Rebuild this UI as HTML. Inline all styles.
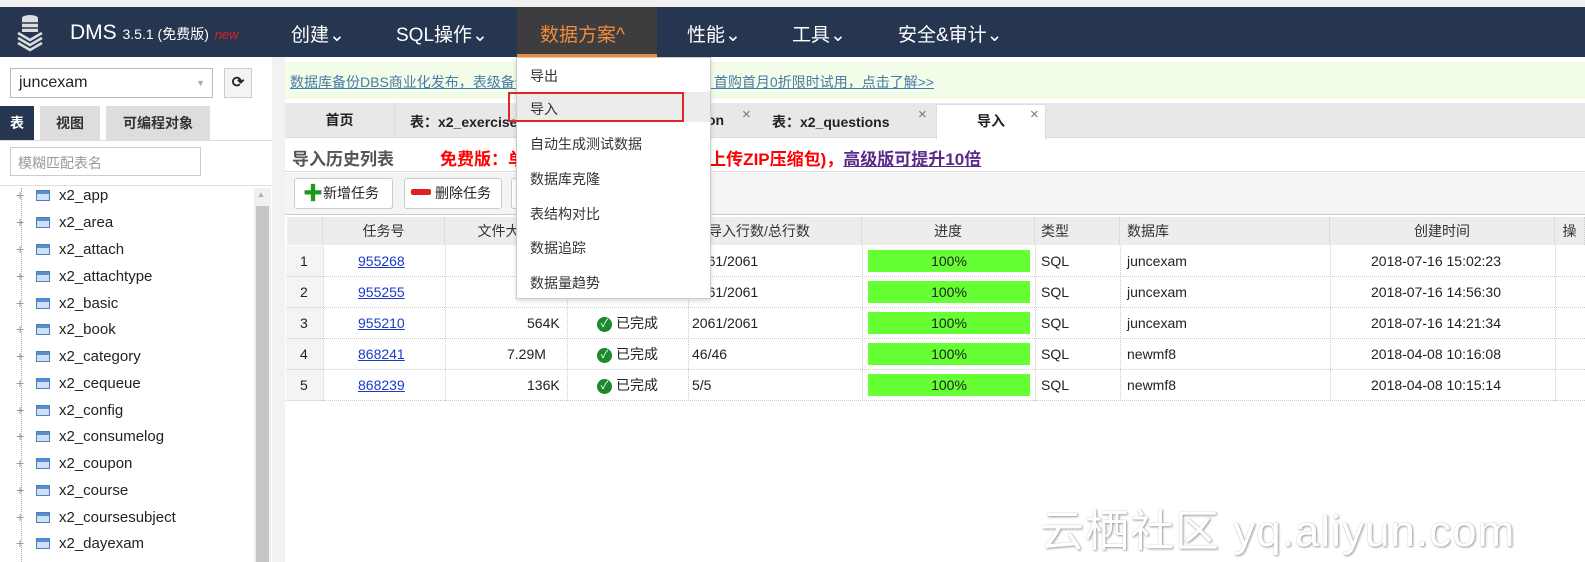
<!DOCTYPE html>
<html><head><meta charset="utf-8"><style>
*{margin:0;padding:0;box-sizing:border-box}
body{width:1585px;height:562px;overflow:hidden;background:#fff;font-family:"Liberation Sans","Noto Sans CJK SC",sans-serif;font-size:15px;color:#222;position:relative}
.a{position:absolute;white-space:nowrap}
.nav{left:0;top:7px;width:1585px;height:50px;background:#263650}
.ni{color:#fff;font-size:19px;top:20px}
.tree{left:16px;font-size:15px;color:#222}
.tree i{display:inline-block;width:14px;height:11px;border:1px solid #4d7fc0;background:linear-gradient(#5b8dd0 0 3px,#cfe0f5 3px);margin:0 9px 0 10px;vertical-align:-1px}
.tree b{display:inline-block;width:10px;color:#999;font-weight:normal;font-size:14px}
.th{top:217px;height:28px;background:#ededed;border-right:1px dotted #ccc;text-align:center;line-height:28px;font-size:14px;color:#333}
.row{left:286px;width:1299px;height:31px;border-bottom:1px dotted #ccc}
.c{line-height:30px;font-size:14px}
.bar{background:#66ff33;width:162px;height:22px;text-align:center;line-height:22px;font-size:14px}
.ok{display:inline-block;width:15px;height:15px;border-radius:50%;background:#1a8a2a;color:#fff;font-size:11px;line-height:15px;text-align:center;vertical-align:1px;margin-right:4px}
.dd{color:#333;font-size:14px;left:530px}
</style></head><body>
<div class="a" style="left:0;top:0;width:1585px;height:7px;background:#f0f0f0"></div>
<div class="a nav"></div>
<svg class="a" style="left:16px;top:13px" width="28" height="40" viewBox="0 0 28 40"><ellipse cx="14" cy="5" rx="8" ry="3" fill="#ddd"/><rect x="6" y="5" width="16" height="14" fill="#ddd"/><path d="M6 10h16M6 15h16" stroke="#263650" stroke-width="1.5"/><path d="M2 20l12 7 12-7M2 25l12 7 12-7M2 30l12 7 12-7" stroke="#ddd" stroke-width="2.5" fill="none"/></svg>
<div class="a" style="left:70px;top:21px;color:#fff;font-size:21px">DMS <span style="font-size:14px">3.5.1 (免费版)</span> <span style="color:#e02020;font-size:13px;font-style:italic">new</span></div>
<div class="a ni" style="left:291px">创建⌄</div>
<div class="a ni" style="left:396px">SQL操作⌄</div>
<div class="a" style="left:517px;top:7px;width:140px;height:50px;background:#3d3d3f;border-bottom:3px solid #f08a3c"></div>
<div class="a ni" style="left:540px;color:#f08a3c">数据方案^</div>
<div class="a ni" style="left:687px">性能⌄</div>
<div class="a ni" style="left:792px">工具⌄</div>
<div class="a ni" style="left:898px">安全&amp;审计⌄</div>

<div class="a" style="left:272px;top:57px;width:13px;height:505px;background:#f2f2f2"></div>
<div class="a" style="left:10px;top:68px;width:203px;height:30px;border:1px solid #bbb;padding:5px 8px;font-size:16px">juncexam<span style="position:absolute;right:7px;top:9px;color:#aaa;font-size:9px">▼</span></div>
<div class="a" style="left:224px;top:68px;width:28px;height:30px;border:1px solid #ccc;background:#f4f4f4;text-align:center;line-height:28px;font-weight:bold">⟳</div>
<div class="a" style="left:0;top:106px;width:34px;height:34px;background:#263650;color:#fff;font-weight:bold;text-align:center;line-height:34px;font-size:14px">表</div>
<div class="a" style="left:40px;top:106px;width:60px;height:34px;background:#ddd;font-weight:bold;text-align:center;line-height:34px;font-size:14px;color:#333">视图</div>
<div class="a" style="left:106px;top:106px;width:104px;height:34px;background:#ddd;font-weight:bold;text-align:center;line-height:34px;font-size:14px;color:#333">可编程对象</div>
<div class="a" style="left:0;top:140px;width:272px;height:1px;background:#ddd"></div>
<div class="a" style="left:10px;top:147px;width:191px;height:29px;border:1px solid #ccc;padding:5px 7px;color:#999;font-size:14px">模糊匹配表名</div>
<div class="a" style="left:0;top:185px;width:272px;height:1px;background:#ddd"></div>
<div class="a" style="left:21px;top:188px;height:374px;border-left:1px dotted #aaa"></div>
<div class="a" style="left:254px;top:188px;width:17px;height:374px;background:#f0f0f0"></div>
<div class="a" style="left:256px;top:206px;width:13px;height:356px;background:#c6c6c6"></div>
<div class="a" style="left:257px;top:190px;font-size:8px;color:#aaa">▲</div>
<div class="a tree" style="top:187px"><b>+</b><i></i>x2_app</div>
<div class="a tree" style="top:214px"><b>+</b><i></i>x2_area</div>
<div class="a tree" style="top:241px"><b>+</b><i></i>x2_attach</div>
<div class="a tree" style="top:268px"><b>+</b><i></i>x2_attachtype</div>
<div class="a tree" style="top:295px"><b>+</b><i></i>x2_basic</div>
<div class="a tree" style="top:321px"><b>+</b><i></i>x2_book</div>
<div class="a tree" style="top:348px"><b>+</b><i></i>x2_category</div>
<div class="a tree" style="top:375px"><b>+</b><i></i>x2_cequeue</div>
<div class="a tree" style="top:402px"><b>+</b><i></i>x2_config</div>
<div class="a tree" style="top:428px"><b>+</b><i></i>x2_consumelog</div>
<div class="a tree" style="top:455px"><b>+</b><i></i>x2_coupon</div>
<div class="a tree" style="top:482px"><b>+</b><i></i>x2_course</div>
<div class="a tree" style="top:509px"><b>+</b><i></i>x2_coursesubject</div>
<div class="a tree" style="top:535px"><b>+</b><i></i>x2_dayexam</div>

<div class="a" style="left:285px;top:62px;width:1300px;height:37px;background:#f1fde9"></div>
<div class="a" style="left:290px;top:72px;color:#4a7aa6;text-decoration:underline;font-size:14px">数据库备份DBS商业化发布，表级备份、秒级RPO，免费试用DBS，首购首月0折限时试用，点击了解&gt;&gt;</div>
<div class="a" style="left:285px;top:103px;width:1300px;height:35px;background:#e8e8e8;border-bottom:1px solid #ddd"></div>
<div class="a" style="left:285px;top:103px;width:110px;height:35px;border-right:1px solid #ddd;text-align:center;line-height:35px;font-weight:bold;font-size:14px">首页</div>
<div class="a" style="left:410px;top:112px;font-weight:bold;font-size:14px">表：x2_exercise</div>
<div class="a" style="left:707px;top:112px;font-weight:bold;font-size:14px">on</div>
<div class="a" style="left:742px;top:106px;color:#777">×</div>
<div class="a" style="left:772px;top:112px;font-weight:bold;font-size:14px">表：x2_questions</div>
<div class="a" style="left:918px;top:106px;color:#777">×</div>
<div class="a" style="left:936px;top:104px;width:110px;height:35px;background:#fff;border:1px solid #ddd;border-bottom:none;text-align:center;line-height:33px;font-weight:bold;font-size:14px">导入</div>
<div class="a" style="left:1030px;top:106px;color:#777">×</div>
<div class="a" style="left:285px;top:138px;width:1300px;height:34px;border-bottom:1px solid #ddd"></div>
<div class="a" style="left:292px;top:145px;font-weight:bold;font-size:17px;color:#555">导入历史列表</div>
<div class="a" style="left:440px;top:145px;font-weight:bold;font-size:17px;color:#f00">免费版：单个文件最大支持100M(可上传ZIP压缩包)，<span style="color:#5a2a8a;text-decoration:underline">高级版可提升10倍</span></div>
<div class="a" style="left:285px;top:173px;width:1300px;height:42px;background:#f4f4f4;border-bottom:1px solid #ccc"></div>
<div class="a" style="left:294px;top:178px;width:99px;height:31px;background:#fff;border:1px solid #ccc;border-radius:3px;line-height:29px;padding-left:8px;font-size:14px"><span style="color:#1a9a1a;font-size:20px;font-weight:bold;vertical-align:-2px">✚</span>新增任务</div>
<div class="a" style="left:404px;top:178px;width:98px;height:31px;background:#fff;border:1px solid #ccc;border-radius:3px;line-height:29px;padding-left:6px;font-size:14px"><span style="display:inline-block;width:20px;height:6px;background:#e02020;border-radius:2px;vertical-align:3px;margin-right:4px"></span>删除任务</div>
<div class="a" style="left:511px;top:178px;width:10px;height:31px;background:#fff;border:1px solid #ccc;border-radius:3px"></div>

<div class="a th" style="left:287px;width:36px"></div>
<div class="a th" style="left:323px;width:122px">任务号</div>
<div class="a th" style="left:445px;width:122px">文件大小</div>
<div class="a th" style="left:567px;width:121px">状态</div>
<div class="a th" style="left:688px;width:174px;text-align:left;padding-left:6px">已导入行数/总行数</div>
<div class="a th" style="left:862px;width:173px">进度</div>
<div class="a th" style="left:1035px;width:85px;text-align:left;padding-left:6px">类型</div>
<div class="a th" style="left:1120px;width:210px;text-align:left;padding-left:7px">数据库</div>
<div class="a th" style="left:1330px;width:225px">创建时间</div>
<div class="a th" style="left:1555px;width:30px">操</div>

<div class="a" style="left:323px;top:246px;height:155px;border-left:1px dotted #ccc"></div>
<div class="a" style="left:445px;top:246px;height:155px;border-left:1px dotted #ccc"></div>
<div class="a" style="left:567px;top:246px;height:155px;border-left:1px dotted #ccc"></div>
<div class="a" style="left:688px;top:246px;height:155px;border-left:1px dotted #ccc"></div>
<div class="a" style="left:862px;top:246px;height:155px;border-left:1px dotted #ccc"></div>
<div class="a" style="left:1035px;top:246px;height:155px;border-left:1px dotted #ccc"></div>
<div class="a" style="left:1120px;top:246px;height:155px;border-left:1px dotted #ccc"></div>
<div class="a" style="left:1330px;top:246px;height:155px;border-left:1px dotted #ccc"></div>
<div class="a" style="left:1555px;top:246px;height:155px;border-left:1px dotted #ccc"></div>
<div class="a" style="left:286px;top:246px;width:37px;height:155px;background:#f4f4f4"></div>

<div class="a row" style="top:246px"></div><div class="a row" style="top:277px"></div><div class="a row" style="top:308px"></div><div class="a row" style="top:339px"></div><div class="a row" style="top:370px"></div>

<div class="a c" style="left:300px;top:246px">1</div><div class="a c" style="left:358px;top:246px;color:#1a3acc;text-decoration:underline">955268</div><div class="a c" style="left:692px;top:246px">2061/2061</div><div class="a bar" style="left:868px;top:250px">100%</div><div class="a c" style="left:1041px;top:246px">SQL</div><div class="a c" style="left:1127px;top:246px">juncexam</div><div class="a c" style="left:1371px;top:246px">2018-07-16 15:02:23</div>
<div class="a c" style="left:300px;top:277px">2</div><div class="a c" style="left:358px;top:277px;color:#1a3acc;text-decoration:underline">955255</div><div class="a c" style="left:692px;top:277px">2061/2061</div><div class="a bar" style="left:868px;top:281px">100%</div><div class="a c" style="left:1041px;top:277px">SQL</div><div class="a c" style="left:1127px;top:277px">juncexam</div><div class="a c" style="left:1371px;top:277px">2018-07-16 14:56:30</div>
<div class="a c" style="left:300px;top:308px">3</div><div class="a c" style="left:358px;top:308px;color:#1a3acc;text-decoration:underline">955210</div><div class="a c" style="left:527px;top:308px">564K</div><div class="a c" style="left:597px;top:308px"><span class="ok">✓</span>已完成</div><div class="a c" style="left:692px;top:308px">2061/2061</div><div class="a bar" style="left:868px;top:312px">100%</div><div class="a c" style="left:1041px;top:308px">SQL</div><div class="a c" style="left:1127px;top:308px">juncexam</div><div class="a c" style="left:1371px;top:308px">2018-07-16 14:21:34</div>
<div class="a c" style="left:300px;top:339px">4</div><div class="a c" style="left:358px;top:339px;color:#1a3acc;text-decoration:underline">868241</div><div class="a c" style="left:507px;top:339px">7.29M</div><div class="a c" style="left:597px;top:339px"><span class="ok">✓</span>已完成</div><div class="a c" style="left:692px;top:339px">46/46</div><div class="a bar" style="left:868px;top:343px">100%</div><div class="a c" style="left:1041px;top:339px">SQL</div><div class="a c" style="left:1127px;top:339px">newmf8</div><div class="a c" style="left:1371px;top:339px">2018-04-08 10:16:08</div>
<div class="a c" style="left:300px;top:370px">5</div><div class="a c" style="left:358px;top:370px;color:#1a3acc;text-decoration:underline">868239</div><div class="a c" style="left:527px;top:370px">136K</div><div class="a c" style="left:597px;top:370px"><span class="ok">✓</span>已完成</div><div class="a c" style="left:692px;top:370px">5/5</div><div class="a bar" style="left:868px;top:374px">100%</div><div class="a c" style="left:1041px;top:370px">SQL</div><div class="a c" style="left:1127px;top:370px">newmf8</div><div class="a c" style="left:1371px;top:370px">2018-04-08 10:15:14</div>

<div class="a" style="left:516px;top:57px;width:195px;height:242px;background:#fff;border:1px solid #ccc;box-shadow:0 2px 4px rgba(0,0,0,.15)"></div>
<div class="a" style="left:517px;top:92px;width:193px;height:30px;background:#ececec"></div>
<div class="a" style="left:508px;top:92px;width:176px;height:30px;border:2px solid #e0252a"></div>
<div class="a dd" style="top:66px">导出</div>
<div class="a dd" style="top:99px">导入</div>
<div class="a dd" style="top:134px">自动生成测试数据</div>
<div class="a dd" style="top:169px">数据库克隆</div>
<div class="a dd" style="top:204px">表结构对比</div>
<div class="a dd" style="top:238px">数据追踪</div>
<div class="a dd" style="top:273px">数据量趋势</div>

<div class="a" style="left:1040px;top:495px;font-size:44px;color:#fff;text-shadow:1px 1px 2px #999,0 0 1px #bbb;letter-spacing:1px">云栖社区 yq.aliyun.com</div>
</body></html>
